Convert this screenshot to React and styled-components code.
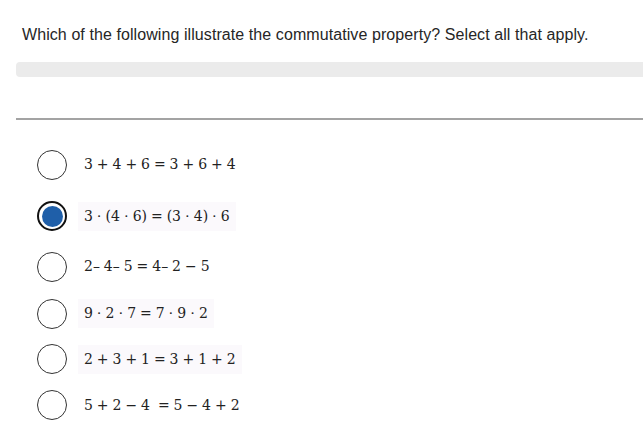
import React from 'react';
import styled, { createGlobalStyle } from 'styled-components';

const Global = createGlobalStyle`
	html, body {
		margin: 0;
		padding: 0;
		background: #fff;
	}
	body {
		font-family: "Liberation Sans", Arial, sans-serif;
		overflow: hidden;
	}
`

const Page = styled.div`
	width: 643px;
	height: 443px;
	padding: 26px 0 0 16px;
	box-sizing: border-box;
	display: flex;
	flex-direction: column;
`

const Question = styled.div`
	padding-left: 6px;
	font-size: 16px;
	line-height: 18px;
	letter-spacing: 0.08px;
	color: #262626;
`

const Bar = styled.div`
	margin-top: 18px;
	height: 15px;
	background: #ebebeb;
	border-radius: 4px 0 0 4px;
`

const Divider = styled.div`
	margin-top: 41px;
	height: 2px;
	background: #a3a3a3;
`

const Options = styled.div`
	margin-top: 19px;
	padding-left: 21px;
	display: flex;
	flex-direction: column;
`

const Row = styled.div`
	height: ${p => p.h}px;
	display: flex;
	align-items: center;
	gap: 11px;
`

const Radio = styled.div`
	width: 30px;
	height: 30px;
	box-sizing: border-box;
	border-radius: 50%;
	border: ${p => p.checked ? '2px solid #111' : '1.3px solid #333'};
	display: flex;
	align-items: center;
	justify-content: center;
	flex-shrink: 0;
	&::after {
		content: '';
		display: ${p => p.checked ? 'block' : 'none'};
		width: 21px;
		height: 21px;
		border-radius: 50%;
		background: #1f5fa9;
	}
`

const Label = styled.div`
	padding: 4px 6px;
	font-family: "DejaVu Serif", "Liberation Serif", serif;
	font-size: 14px;
	line-height: 21px;
	word-spacing: -0.5px;
	color: #222;
	white-space: pre;
	background: ${p => p.shade ? '#fbf9fc' : 'transparent'};
`

const options = [
	{ text: '3 + 4 + 6 = 3 + 6 + 4', h: 51 },
	{ text: '3 \u22C5 (4 \u22C5 6) = (3 \u22C5 4) \u22C5 6', h: 52, checked: true, shade: true },
	{ text: '2\u2013 4\u2013 5 = 4\u2013 2 \u2212 5', h: 49 },
	{ text: '9 \u22C5 2 \u22C5 7 = 7 \u22C5 9 \u22C5 2', h: 45, shade: true },
	{ text: '2 + 3 + 1 = 3 + 1 + 2', h: 46, shade: true },
	{ text: '5 + 2 \u2212 4  = 5 \u2212 4 + 2', h: 46 },
]

const App = () => {
	return (<Page>
		<Global />
		<Question>Which of the following illustrate the commutative property? Select all that apply.</Question>
		<Bar />
		<Divider />
		<Options>
			{options.map((o, i) => (
				<Row key={i} h={o.h}>
					<Radio checked={o.checked} />
					<Label shade={o.shade}>{o.text}</Label>
				</Row>
			))}
		</Options>
	</Page>);
};

export default App
